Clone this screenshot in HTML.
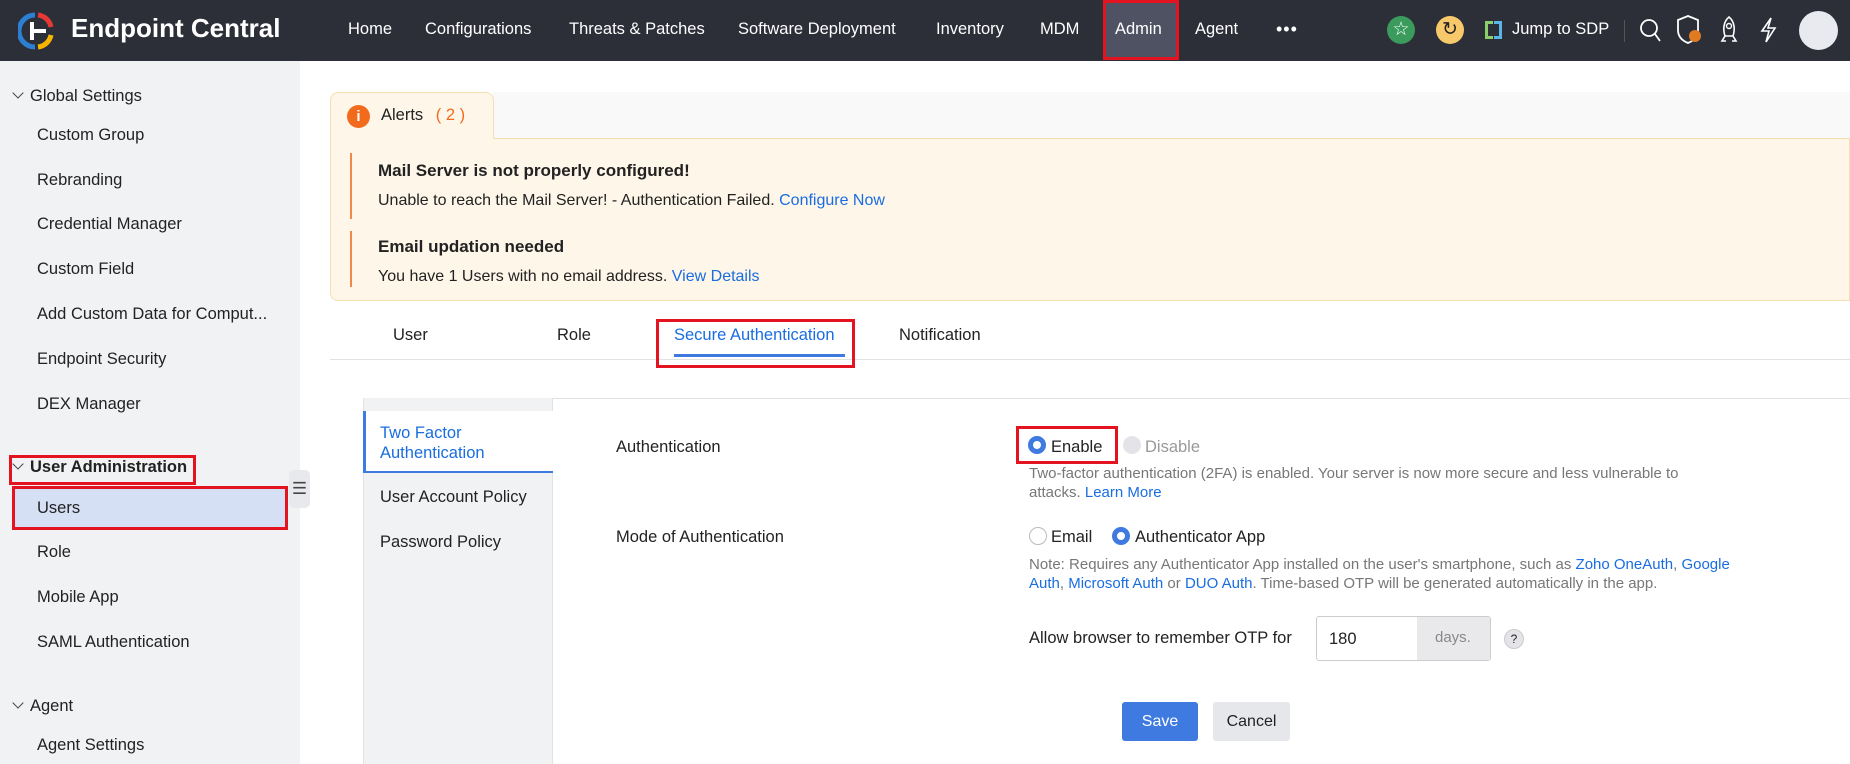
<!DOCTYPE html>
<html><head><meta charset="utf-8"><style>
*{margin:0;padding:0;box-sizing:border-box}
body{width:1850px;height:764px;overflow:hidden;font-family:"Liberation Sans",sans-serif;background:#fff;color:#222;position:relative;font-size:16px}
.a{position:absolute;white-space:nowrap}
.hdr{position:absolute;left:0;top:0;width:1850px;height:61px;background:#2c2e38}
.nav{color:#fff;font-size:16.5px;top:20px}
.sb{position:absolute;left:0;top:61px;width:300px;height:703px;background:#f1f2f4}
.si{font-size:16.5px;color:#222}
.blue{color:#1a6de0}
.chev{display:inline-block;width:8px;height:8px;border-right:1.3px solid #444;border-bottom:1.3px solid #444;transform:rotate(45deg);margin-right:8px;position:relative;top:-4px}
.rb{position:absolute;border:3px solid #e3141f}
.radio{position:absolute;width:18px;height:18px;border-radius:50%}
.on{background:#fff;border:5px solid #3e7ae0}
.off{border:1px solid #bbb;background:#fff}
.dis{background:#e4e4e8}
.g{color:#777;font-size:15px}
</style></head><body>
<div class="hdr"></div>
<svg class="a" style="left:18px;top:12px" width="36" height="38" viewBox="0 0 36 38">
<path d="M17 3 A15 15 0 0 0 17 35" fill="none" stroke="#2d7fd3" stroke-width="5"/>
<path d="M20 3 A15 15 0 0 1 33 15" fill="none" stroke="#e53935" stroke-width="5"/>
<path d="M33 23 A15 15 0 0 1 20 35" fill="none" stroke="#f7b500" stroke-width="5"/>
<rect x="12" y="17" width="16" height="4" fill="#fff"/><rect x="12" y="10" width="4" height="18" fill="#fff"/>
</svg>
<div class="a" style="left:71px;top:13px;color:#fff;font-size:26px;font-weight:bold">Endpoint Central</div>
<div class="a nav" style="left:348px">Home</div>
<div class="a nav" style="left:425px">Configurations</div>
<div class="a nav" style="left:569px">Threats &amp; Patches</div>
<div class="a nav" style="left:738px">Software Deployment</div>
<div class="a nav" style="left:936px">Inventory</div>
<div class="a nav" style="left:1040px">MDM</div>
<div class="a" style="left:1103px;top:0;width:76px;height:60px;background:#4f5262;border:3px solid #e3141f"></div>
<div class="a nav" style="left:1115px">Admin</div>
<div class="a nav" style="left:1195px">Agent</div>
<div class="a nav" style="left:1276px;top:19px;font-size:18px;letter-spacing:1px">•••</div>
<div class="a" style="left:1387px;top:16px;width:28px;height:28px;border-radius:50%;background:#3a9b5c;color:#fff;text-align:center;font-size:19px;line-height:28px">☆</div>
<div class="a" style="left:1436px;top:16px;width:28px;height:28px;border-radius:50%;background:#f7c96b;color:#222;text-align:center;font-size:19px;line-height:28px">↻</div>
<div class="a" style="left:1485px;top:21px;width:8px;height:18px;border:3px solid #8ad06a;border-right:none"></div>
<div class="a" style="left:1494px;top:21px;width:8px;height:18px;border:3px solid #5ab6e8;border-left:none"></div>
<div class="a nav" style="left:1512px">Jump to SDP</div>
<div class="a" style="left:1624px;top:20px;width:1px;height:22px;background:#555"></div>
<svg class="a" style="left:1638px;top:17px" width="24" height="26"><circle cx="11" cy="11" r="8" fill="none" stroke="#fff" stroke-width="1.8"/><line x1="17" y1="17" x2="22" y2="24" stroke="#fff" stroke-width="1.8"/></svg>
<svg class="a" style="left:1676px;top:14px" width="28" height="32"><path d="M12 2 L22 6 V16 C22 23 17 27 12 29 C7 27 2 23 2 16 V6 Z" fill="none" stroke="#fff" stroke-width="1.8"/><circle cx="19" cy="22" r="6" fill="#e07b22"/></svg>
<svg class="a" style="left:1718px;top:15px" width="22" height="30"><path d="M11 2 C17 7 17 15 15 21 H7 C5 15 5 7 11 2 Z M7 21 L4 26 H8 M15 21 L18 26 H14" fill="none" stroke="#fff" stroke-width="1.6"/><circle cx="11" cy="11" r="2.5" fill="none" stroke="#fff" stroke-width="1.4"/></svg>
<svg class="a" style="left:1758px;top:16px" width="20" height="28"><path d="M13 2 L4 15 H11 L8 26 L17 12 H10 Z" fill="none" stroke="#fff" stroke-width="1.6"/></svg>
<div class="a" style="left:1799px;top:11px;width:39px;height:39px;border-radius:50%;background:#e8eaef"></div>

<div class="sb"></div>
<div class="a si" style="left:14px;top:87px;font-weight:500"><span class="chev"></span>Global Settings</div>
<div class="a si" style="left:37px;top:126px">Custom Group</div>
<div class="a si" style="left:37px;top:171px">Rebranding</div>
<div class="a si" style="left:37px;top:215px">Credential Manager</div>
<div class="a si" style="left:37px;top:260px">Custom Field</div>
<div class="a si" style="left:37px;top:305px">Add Custom Data for Comput...</div>
<div class="a si" style="left:37px;top:350px">Endpoint Security</div>
<div class="a si" style="left:37px;top:395px">DEX Manager</div>
<div class="rb" style="left:9px;top:455px;width:187px;height:30px"></div>
<div class="a si" style="left:14px;top:458px;font-weight:bold"><span class="chev"></span>User Administration</div>
<div class="a" style="left:13px;top:487px;width:275px;height:42px;background:#d5e0f5"></div>
<div class="rb" style="left:12px;top:486px;width:276px;height:44px"></div>
<div class="a si" style="left:37px;top:499px">Users</div>
<div class="a" style="left:289px;top:470px;width:21px;height:38px;background:#e8e9ec;border-radius:5px;font-size:17px;text-align:center;line-height:38px;color:#444">☰</div>
<div class="a si" style="left:37px;top:543px">Role</div>
<div class="a si" style="left:37px;top:588px">Mobile App</div>
<div class="a si" style="left:37px;top:633px">SAML Authentication</div>
<div class="a si" style="left:14px;top:697px"><span class="chev"></span>Agent</div>
<div class="a si" style="left:37px;top:736px">Agent Settings</div>

<div class="a" style="left:493px;top:92px;width:1357px;height:47px;background:#f9f9f9;border-bottom:1px solid #f5dfae"></div>
<div class="a" style="left:330px;top:92px;width:164px;height:48px;background:#fdf6e9;border:1px solid #f5dfae;border-bottom:none;border-radius:8px 8px 0 0"></div>
<div class="a" style="left:347px;top:105px;width:23px;height:23px;border-radius:50%;background:#f26b1d;color:#fff;text-align:center;font-weight:bold;font-size:15px;line-height:23px">i</div>
<div class="a" style="left:381px;top:106px;font-size:16.5px">Alerts <span style="color:#f26b1d;margin-left:8px">( 2 )</span></div>
<div class="a" style="left:330px;top:139px;width:1520px;height:162px;background:#fdf6e9;border:1px solid #f5dfae;border-top:none;border-radius:0 0 0 8px"></div>
<div class="a" style="left:350px;top:153px;width:2px;height:66px;background:#f2884a"></div>
<div class="a" style="left:350px;top:231px;width:2px;height:56px;background:#f2884a"></div>
<div class="a" style="left:378px;top:161px;font-size:17px;font-weight:bold">Mail Server is not properly configured!</div>
<div class="a" style="left:378px;top:192px;font-size:16px">Unable to reach the Mail Server! - Authentication Failed. <span class="blue">Configure Now</span></div>
<div class="a" style="left:378px;top:237px;font-size:17px;font-weight:bold">Email updation needed</div>
<div class="a" style="left:378px;top:268px;font-size:16px">You have 1 Users with no email address. <span class="blue">View Details</span></div>

<div class="a" style="left:330px;top:359px;width:1520px;height:1px;background:#e2e2e2"></div>
<div class="a si" style="left:393px;top:326px">User</div>
<div class="a si" style="left:557px;top:326px">Role</div>
<div class="a si blue" style="left:674px;top:326px">Secure Authentication</div>
<div class="a" style="left:674px;top:354px;width:171px;height:3px;background:#3e7ae0"></div>
<div class="rb" style="left:656px;top:319px;width:199px;height:49px"></div>
<div class="a si" style="left:899px;top:326px">Notification</div>

<div class="a" style="left:363px;top:398px;width:1487px;height:1px;background:#e2e2e2"></div>
<div class="a" style="left:363px;top:398px;width:190px;height:366px;background:#f1f2f4;border-left:1px solid #e2e2e2;border-right:1px solid #e2e2e2"></div>
<div class="a" style="left:363px;top:411px;width:190px;height:62px;background:#fff;border-left:3px solid #3e7ae0;border-bottom:2px solid #3e7ae0"></div>
<div class="a si blue" style="left:380px;top:423px;line-height:20px">Two Factor<br>Authentication</div>
<div class="a si" style="left:380px;top:488px">User Account Policy</div>
<div class="a si" style="left:380px;top:533px">Password Policy</div>

<div class="a si" style="left:616px;top:438px">Authentication</div>
<div class="rb" style="left:1016px;top:426px;width:102px;height:38px"></div>
<div class="radio on" style="left:1028px;top:436px"></div>
<div class="a si" style="left:1051px;top:438px">Enable</div>
<div class="radio dis" style="left:1123px;top:436px"></div>
<div class="a si" style="left:1145px;top:438px;color:#999">Disable</div>
<div class="a g" style="left:1029px;top:464px;line-height:19px">Two-factor authentication (2FA) is enabled. Your server is now more secure and less vulnerable to<br>attacks. <span class="blue">Learn More</span></div>
<div class="a si" style="left:616px;top:528px">Mode of Authentication</div>
<div class="radio off" style="left:1029px;top:527px"></div>
<div class="a si" style="left:1051px;top:528px">Email</div>
<div class="radio on" style="left:1112px;top:527px"></div>
<div class="a si" style="left:1135px;top:528px">Authenticator App</div>
<div class="a g" style="left:1029px;top:555px;line-height:19px">Note: Requires any Authenticator App installed on the user's smartphone, such as <span class="blue">Zoho OneAuth</span>, <span class="blue">Google</span><br><span class="blue">Auth</span>, <span class="blue">Microsoft Auth</span> or <span class="blue">DUO Auth</span>. Time-based OTP will be generated automatically in the app.</div>
<div class="a si" style="left:1029px;top:629px">Allow browser to remember OTP for</div>
<div class="a" style="left:1316px;top:616px;width:175px;height:45px;border:1px solid #ccc;border-radius:3px;background:#fff"></div>
<div class="a" style="left:1417px;top:617px;width:73px;height:43px;background:#e9e9ec"></div>
<div class="a si" style="left:1329px;top:630px">180</div>
<div class="a" style="left:1435px;top:629px;color:#888;font-size:15px">days.</div>
<div class="a" style="left:1504px;top:629px;width:20px;height:20px;border-radius:50%;background:#e4e4e8;border:1px solid #ccc;font-size:12px;text-align:center;line-height:18px">?</div>
<div class="a" style="left:1122px;top:702px;width:76px;height:39px;background:#3e7ae0;border-radius:3px;color:#fff;text-align:center;line-height:39px;font-size:16px">Save</div>
<div class="a" style="left:1213px;top:702px;width:77px;height:39px;background:#e6e7ea;border-radius:3px;text-align:center;line-height:39px;font-size:16px">Cancel</div>
</body></html>
